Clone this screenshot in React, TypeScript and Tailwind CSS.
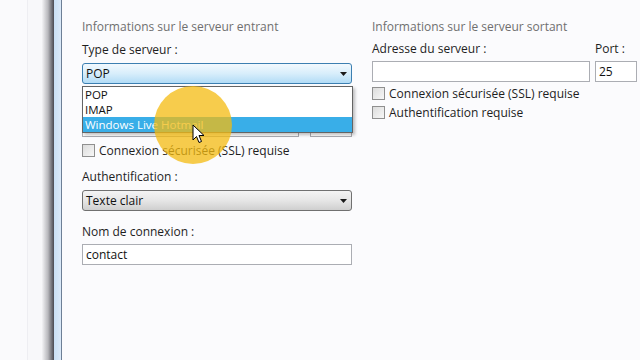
import React from 'react'

function Arrow() {
    return (
        <svg width="7" height="4" viewBox="0 0 7 4" className="flex-none">
            <path d="M0 0 L7 0 L3.5 4 Z" fill="#1a1a1a" />
        </svg>
    )
}

function Checkbox({ label }: { label: string }) {
    return (
        <div className="flex items-center gap-[4px] h-[18px]">
            <div className="w-[13px] h-[13px] border border-[#8f8f8f] bg-gradient-to-br from-[#dcdcdc] to-[#f7f7f7] flex-none" />
            <span className="text-[#1e1e1e]">{label}</span>
        </div>
    )
}

function Cursor() {
    return (
        <svg width="13" height="20" viewBox="0 0 13 20" className="absolute left-[192px] top-[124px]">
            <path d="M1 1 L1 16 L4.5 12.5 L7 18.5 L9.5 17.5 L7 11.5 L12 11.5 Z" fill="#ffffff" stroke="#000000" strokeWidth="1" strokeLinejoin="round" />
        </svg>
    )
}

export default function App() {
    return (
        <div className="w-[640px] h-[360px] bg-[#fbfbfd] flex overflow-hidden relative text-[12px] leading-[15px]" style={{ fontFamily: '"Open Sans", "Noto Sans", sans-serif' }}>
            {/* Left window edge */}
            <div className="w-[28px] flex-none bg-[#fafafc] border-r border-[#eeeef2]" />
            <div className="w-[14px] flex-none bg-[#f8f8fa]" />
            <div className="w-[12px] flex-none bg-gradient-to-r from-[#f4f4f6] via-[#b8b8bc] to-[#4a4a52]" />
            <div className="w-[7px] flex-none bg-gradient-to-r from-[#c9dff4] to-[#dbe9f8]" />
            <div className="w-[1px] flex-none bg-[#6d7f96]" />

            {/* Content */}
            <div className="flex-1 flex pl-[20px] pt-[19px] gap-[20px]">
                {/* Incoming */}
                <div className="w-[270px] flex flex-col">
                    <div className="text-[#6f6f6f] h-[15px]">Informations sur le serveur entrant</div>
                    <div className="text-[#1e1e1e] mt-[8px] h-[15px]">Type de serveur :</div>
                    <div className="mt-[6px] h-[21px] border border-[#3c7fb1] rounded-[3px] bg-gradient-to-b from-[#f2f9fe] via-[#d8eefb] to-[#b2dcf6] flex items-center justify-between pl-[3px] pr-[4px]">
                        <span className="text-[#111]">POP</span>
                        <Arrow />
                    </div>
                    {/* Server address row, hidden under the open list */}
                    <div className="flex gap-[11px] mt-[33px]">
                        <div className="flex-1 h-[20px] border border-[#abadb3] bg-white" />
                        <div className="w-[42px] h-[20px] border border-[#abadb3] bg-white" />
                    </div>
                    <div className="mt-[4px]">
                        <Checkbox label="Connexion sécurisée (SSL) requise" />
                    </div>
                    <div className="text-[#1e1e1e] mt-[10px] h-[15px]">Authentification :</div>
                    <div className="mt-[6px] h-[21px] border border-[#707070] rounded-[3px] bg-gradient-to-b from-[#f4f4f4] via-[#e6e6e6] to-[#cfcfcf] flex items-center justify-between pl-[3px] pr-[4px]">
                        <span className="text-[#111]">Texte clair</span>
                        <Arrow />
                    </div>
                    <div className="text-[#1e1e1e] mt-[13px] h-[15px]">Nom de connexion :</div>
                    <div className="mt-[5px] h-[21px] border border-[#abadb3] bg-white flex items-center pl-[3px] text-[#111]">contact</div>
                </div>

                {/* Outgoing */}
                <div className="w-[265px] flex flex-col">
                    <div className="text-[#6f6f6f] h-[15px]">Informations sur le serveur sortant</div>
                    <div className="flex justify-between mt-[7px] h-[15px] text-[#1e1e1e]">
                        <span>Adresse du serveur :</span>
                        <span className="w-[42px]">Port :</span>
                    </div>
                    <div className="flex gap-[5px] mt-[5px]">
                        <div className="flex-1 h-[21px] border border-[#abadb3] bg-white" />
                        <div className="w-[42px] h-[21px] border border-[#abadb3] bg-white flex items-center pl-[3px] text-[#111]">25</div>
                    </div>
                    <div className="mt-[2px]">
                        <Checkbox label="Connexion sécurisée (SSL) requise" />
                    </div>
                    <div className="mt-[1px]">
                        <Checkbox label="Authentification requise" />
                    </div>
                </div>
            </div>

            {/* Open dropdown list */}
            <div className="absolute left-[82px] top-[86px] w-[271px] h-[47px] bg-white border border-[#646464] shadow-[2px_2px_3px_rgba(0,0,0,0.25)] flex flex-col text-[#111] text-[11.5px] leading-[15px]">
                <div className="h-[15px] pl-[2px] flex items-center">POP</div>
                <div className="h-[15px] pl-[2px] flex items-center">IMAP</div>
                <div className="h-[15px] pl-[2px] flex items-center bg-[#39aee8] text-white">Windows Live Hotmail</div>
            </div>

            {/* Cursor highlight */}
            <div className="absolute left-[154px] top-[86px] w-[78px] h-[78px] rounded-full bg-[#f4bb10]/75" />
            <Cursor />
        </div>
    )
}
